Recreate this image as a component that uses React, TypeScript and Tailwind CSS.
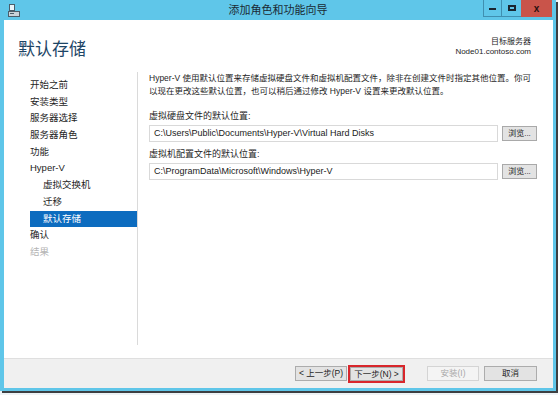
import React from 'react';

const navItems: { label: string; sub?: boolean; active?: boolean; disabled?: boolean }[] = [
  { label: '开始之前' },
  { label: '安装类型' },
  { label: '服务器选择' },
  { label: '服务器角色' },
  { label: '功能' },
  { label: 'Hyper-V' },
  { label: '虚拟交换机', sub: true },
  { label: '迁移', sub: true },
  { label: '默认存储', sub: true, active: true },
  { label: '确认' },
  { label: '结果', disabled: true },
];

function TitleIcon() {
  return (
    <svg width="12" height="13" viewBox="0 0 12 13">
      <rect x="1.5" y="0.5" width="5" height="6" fill="#e8f4fa" stroke="#4a5d6a" />
      <rect x="0.5" y="7.5" width="11" height="5" fill="#c9d3da" stroke="#4a5d6a" />
      <rect x="2" y="9" width="4" height="1" fill="#4a5d6a" />
    </svg>
  );
}

function PathField({ label, value }: { label: string; value: string }) {
  return (
    <div>
      <div className="h-[13px] leading-[13px] text-[#1e1e1e]">{label}</div>
      <div className="mt-[2px] flex items-center gap-[4px]">
        <div className="flex-1 h-[17px] border border-[#d9d9d9] bg-white pl-[4px] leading-[15px] text-[#1a1a1a]">
          {value}
        </div>
        <button className="w-[35px] h-[15px] border border-[#a9a9a9] bg-[#e3e3e3] text-[8px] leading-[13px] text-[#222]">
          浏览...
        </button>
      </div>
    </div>
  );
}

export default function App() {
  return (
    <div className="w-[558px] h-[395px] bg-[#eef3f6] overflow-hidden font-['Liberation_Sans','Noto_Sans_CJK_SC',sans-serif] text-[9px]">
      <div className="w-[556px] h-[391px] bg-[#5fc6e9] shadow-[2px_2px_0_#3c3f42] flex flex-col">
        {/* title bar */}
        <div className="h-[20px] flex items-start">
          <div className="w-[79px] h-[20px] flex items-center pl-[8px]">
            <TitleIcon />
          </div>
          <div className="flex-1 h-[20px] leading-[20px] text-center text-[11px] text-[#1b2a33]">
            添加角色和功能向导
          </div>
          <div className="w-[79px] flex justify-end pr-[4px]">
            <div className="w-[18px] h-[17px] border-l border-b border-[#3f8fb0] flex items-center justify-center">
              <div className="w-[7px] h-[2px] bg-[#1a2630] mt-[2px]" />
            </div>
            <div className="w-[20px] h-[17px] border-l border-b border-[#3f8fb0] flex items-center justify-center">
              <div className="w-[8px] h-[6px] border-2 border-[#1a2630]" />
            </div>
            <div className="w-[31px] h-[17px] bg-[#c9544a] flex items-center justify-center text-[10px] font-bold text-[#2a1010]">
              x
            </div>
          </div>
        </div>

        {/* body */}
        <div className="flex-1 ml-[4px] mr-[3px] mb-[3px] bg-white flex flex-col">
          <div className="h-[52px] flex justify-between pl-[14px] pr-[22px]">
            <div className="pt-[18px] text-[17px] leading-[20px] text-[#1d4566] font-['Noto_Sans_CJK_SC',sans-serif]">
              默认存储
            </div>
            <div className="pt-[17px] text-right text-[8px] leading-[10px] text-[#1e1e1e]">
              <div>目标服务器</div>
              <div>Node01.contoso.com</div>
            </div>
          </div>

          <div className="flex-1 flex">
            <div className="w-[134px] shrink-0 mb-[13px] border-r border-[#dadada] pt-[5px] pl-[26px] text-[9.5px]">
              {navItems.map((item) => (
                <div
                  key={item.label}
                  className={`h-[16.7px] leading-[16.7px] ${item.sub ? 'pl-[13px]' : ''} ${
                    item.active ? 'bg-[#0d6cbf] text-white' : item.disabled ? 'text-[#b5b5b5]' : 'text-[#1e1e1e]'
                  }`}
                >
                  {item.label}
                </div>
              ))}
            </div>

            <div className="flex-1 min-w-0 pl-[11px] pr-[16px]">
              <div className="leading-[13px] text-[8.5px] text-[#1e1e1e]">
                <div className="whitespace-nowrap">
                  Hyper-V 使用默认位置来存储虚拟硬盘文件和虚拟机配置文件，除非在创建文件时指定其他位置。你可
                </div>
                <div className="whitespace-nowrap">
                  以现在更改这些默认位置，也可以稍后通过修改 Hyper-V 设置来更改默认位置。
                </div>
              </div>
              <div className="mt-[12px]">
                <PathField label="虚拟硬盘文件的默认位置:" value="C:\Users\Public\Documents\Hyper-V\Virtual Hard Disks" />
              </div>
              <div className="mt-[6px]">
                <PathField label="虚拟机配置文件的默认位置:" value="C:\ProgramData\Microsoft\Windows\Hyper-V" />
              </div>
            </div>
          </div>

          {/* footer */}
          <div className="h-[30px] border-t border-[#dfdfdf] bg-[#f0f0f0] flex items-center justify-end pr-[16px] text-[8.5px]">
            <button className="w-[52px] h-[15px] border border-[#acacac] bg-[#e3e3e3] text-[#1e1e1e] leading-[13px]">
              &lt; 上一步(P)
            </button>
            <div className="ml-[1px] border-2 border-[#d8262b] p-0">
              <button className="w-[53px] h-[14px] border border-[#acacac] bg-[#e3e3e3] text-[#1e1e1e] leading-[12px] block">
                下一步(N) &gt;
              </button>
            </div>
            <button className="ml-[22px] w-[52px] h-[15px] border border-[#d4d4d4] bg-[#f4f4f4] text-[#a8a8a8] leading-[13px]">
              安装(I)
            </button>
            <button className="ml-[5px] w-[53px] h-[15px] border border-[#acacac] bg-[#e3e3e3] text-[#1e1e1e] leading-[13px]">
              取消
            </button>
          </div>
        </div>
      </div>
    </div>
  );
}
